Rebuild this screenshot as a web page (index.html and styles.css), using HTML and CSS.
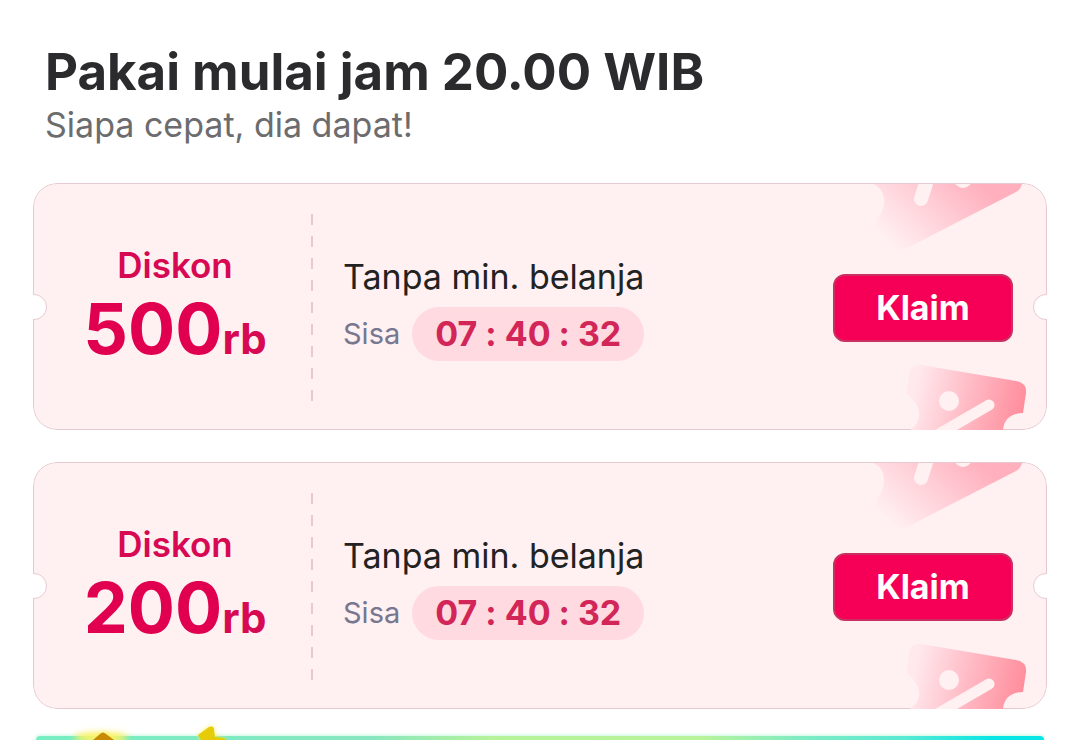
FILE: index.html
```html
<!DOCTYPE html>
<html lang="id">
<head>
<meta charset="utf-8">
<meta name="viewport" content="width=device-width, initial-scale=1">
<title>Kupon diskon</title>
<link rel="stylesheet" href="styles.css">
</head>
<body>
<svg class="defs" width="0" height="0" aria-hidden="true">
  <defs>
    <linearGradient id="fade-top" gradientUnits="userSpaceOnUse" x1="46" y1="62" x2="120" y2="-14">
      <stop offset="0" stop-color="#fff0f2"/><stop offset=".5" stop-color="#ffd0d8"/><stop offset="1" stop-color="#ffafbd"/>
    </linearGradient>
    <linearGradient id="fade-bottom" gradientUnits="userSpaceOnUse" x1="64" y1="222" x2="172" y2="246">
      <stop offset="0" stop-color="#ffe9ed"/><stop offset=".45" stop-color="#ffbec8"/><stop offset="1" stop-color="#ff8d9c"/>
    </linearGradient>
    <symbol id="tickets" viewBox="0 0 200 246">
      <path fill="url(#fade-top)" d="M26 0C34 3 38 11 37 20C36 30 29 33 29 42C30 52 33 61 37 65C43 71 52 68 64 62L169 8Q174 5 175 0Z"/>
      <path class="cut" stroke-width="14" d="M82-10L74 15"/>
      <circle fill="#fff0f2" cx="116" cy="-5" r="9"/>
      <path fill="url(#fade-bottom)" d="M63 246C70 241 73 235 72 229C71 220 66 216 60 210L62 190Q64 180 74 181L169 197Q180 199 179 209L176 229C164 229 157 235 156 246Z"/>
      <circle fill="#fff0f2" cx="102" cy="217" r="10"/>
      <path class="cut" stroke-width="11" d="M142 221L92 250"/>
    </symbol>
  </defs>
</svg>
<main class="page">
  <header class="heading">
    <h1 class="title">Pakai mulai jam 20.00 WIB</h1>
    <p class="subtitle">Siapa cepat, dia dapat!</p>
  </header>
  <section class="coupons">
    <article class="coupon">
      <svg class="tickets" aria-hidden="true"><use href="#tickets"/></svg>
      <div class="discount">
        <span class="label">Diskon</span>
        <strong class="amount">500<span class="unit">rb</span></strong>
      </div>
      <div class="divider"></div>
      <div class="terms">
        <h2 class="condition">Tanpa min. belanja</h2>
        <div class="remaining"><span>Sisa</span><time class="timer"><span>07</span><span>:</span><span>40</span><span>:</span><span>32</span></time></div>
      </div>
      <button class="claim" type="button">Klaim</button>
    </article>
    <article class="coupon">
      <svg class="tickets" aria-hidden="true"><use href="#tickets"/></svg>
      <div class="discount">
        <span class="label">Diskon</span>
        <strong class="amount">200<span class="unit">rb</span></strong>
      </div>
      <div class="divider"></div>
      <div class="terms">
        <h2 class="condition">Tanpa min. belanja</h2>
        <div class="remaining"><span>Sisa</span><time class="timer"><span>07</span><span>:</span><span>40</span><span>:</span><span>32</span></time></div>
      </div>
      <button class="claim" type="button">Klaim</button>
    </article>
  </section>
  <div class="banner">
    <svg class="ornaments" width="240" height="20" viewBox="0 0 240 20" aria-hidden="true">
      <ellipse class="glow" cx="68" cy="18" rx="26" ry="4"/>
      <path fill="#c98a05" d="M60 20L67 14Q70 11 73 14L81 20Z"/>
      <path fill="#e6cb08" d="M168 20L165 15L176 7Q181 5 181 10L182 17L191 18L193 20Z"/>
    </svg>
  </div>
</main>
</body>
</html>
```
FILE: styles.css
```css
* { box-sizing: border-box; }
body {
  margin: 0;
  background: #fff;
  color: #2b2b2d;
  font-family: Inter, "Liberation Sans", sans-serif;
  overflow: hidden;
}
h1, h2, p { margin: 0; }
.defs { position: absolute; }
.page { padding: 41px 33px 0; }
.heading { padding: 0 12px; }
.title { font-size: 51px; line-height: 62px; font-weight: 700; }
.subtitle { font-size: 34px; line-height: 44px; font-weight: 400; color: #6c6c6e; }
.coupons { display: grid; gap: 32px; margin-top: 36px; }
.coupon {
  position: relative;
  display: flex;
  align-items: center;
  min-height: 247px;
  padding: 2px 33px 0 18px;
  clip-path: inset(0 round 24px);
  border: 1px solid #e6cad0;
  border-radius: 24px;
  background: #fff0f2;
}
.coupon::before, .coupon::after {
  content: "";
  position: absolute;
  top: 110px;
  width: 24px;
  height: 24px;
  border: 1px solid #e6cad0;
  border-radius: 50%;
  background: #fff;
}
.coupon::before { left: -13px; }
.coupon::after { right: -13px; }
.tickets { position: absolute; top: 0; right: -1px; width: 200px; height: 246px; }
.cut { fill: none; stroke: #fff0f2; stroke-linecap: round; }
.discount {
  display: flex;
  flex: 0 0 246px;
  flex-direction: column;
  align-items: center;
  padding-top: 8px;
  color: #d80953;
}
.label { font-size: 35px; line-height: 44px; font-weight: 600; }
.amount { font-size: 70px; line-height: 84px; font-weight: 700; color: #e0004f; white-space: nowrap; }
.unit { font-size: 42px; font-weight: 700; color: #d80953; }
.divider {
  width: 2px;
  height: 188px;
  margin: 0 30px 0 13px;
  background: repeating-linear-gradient(#ebc7ce 0 11px, transparent 11px 22px);
}
.terms { flex: 1; }
.condition { font-size: 34px; line-height: 44px; font-weight: 400; color: #222; }
.remaining {
  display: flex;
  align-items: center;
  gap: 12px;
  margin-top: 8px;
  color: #777790;
  font-size: 29px;
  font-weight: 400;
}
.timer {
  display: flex;
  gap: 8px;
  padding: 5px 23px;
  border-radius: 27px;
  background: #ffdae0;
  color: #d22558;
  font-size: 34px;
  line-height: 44px;
  font-weight: 700;
}
.claim {
  position: relative;
  width: 180px;
  height: 68px;
  padding: 0;
  border: 2px solid #c92f61;
  border-radius: 12px;
  background: #f50056;
  color: #fff;
  font: 700 34px/44px Inter, "Liberation Sans", sans-serif;
}
.banner {
  position: relative;
  height: 4px;
  margin: 27px 3px 0;
  border-radius: 4px 4px 0 0;
  background: linear-gradient(90deg, #76efc3, #87e6c0 33%, #b5f29a 45%, #b9f39a 66%, #83ecc0 75%, #58ead4 86%, #08e5e5 95%);
  box-shadow: 0 0 4px #a7f4d3;
}
.ornaments { position: absolute; left: -3px; bottom: 0; filter: drop-shadow(0 0 2px #ffef50); }
.glow { fill: #fff36a; filter: blur(3px); }
```
